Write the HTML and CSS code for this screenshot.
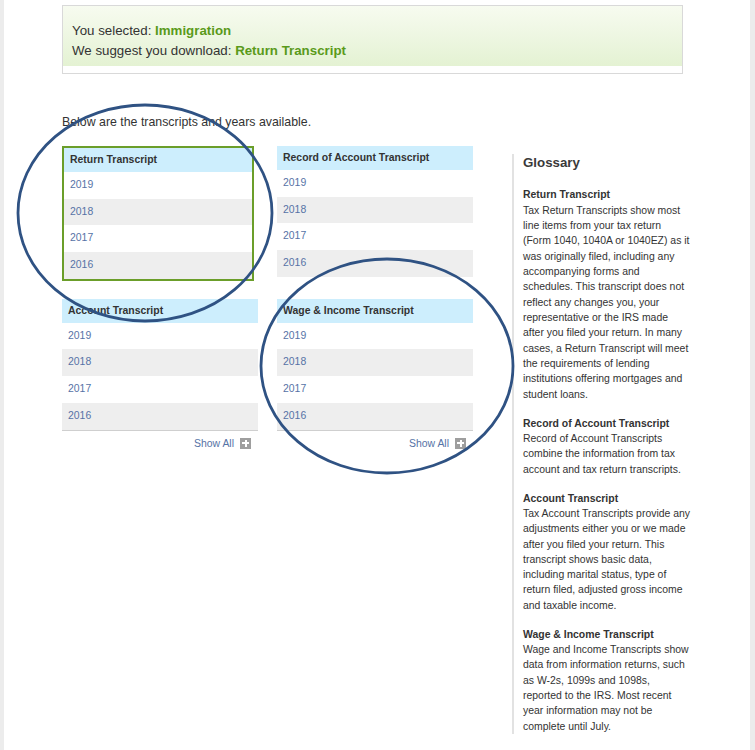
FILE: index.html
```html
<!DOCTYPE html>
<html>
<head>
<meta charset="utf-8">
<link rel="stylesheet" href="styles.css">
</head>
<body>
<div class="page">
  <div class="alert">
    <div class="alert-inner">
      <div>You selected: <strong>Immigration</strong></div>
      <div>We suggest you download: <strong>Return Transcript</strong></div>
    </div>
  </div>

  <p class="intro">Below are the transcripts and years available.</p>

  <div class="main">
    <div class="cards">
      <div class="card selected">
        <div class="card-head">Return Transcript</div>
        <div class="row">2019</div>
        <div class="row alt">2018</div>
        <div class="row">2017</div>
        <div class="row alt">2016</div>
      </div>
      <div class="card">
        <div class="card-head">Record of Account Transcript</div>
        <div class="row">2019</div>
        <div class="row alt">2018</div>
        <div class="row">2017</div>
        <div class="row alt">2016</div>
      </div>
      <div class="card">
        <div class="card-head">Account Transcript</div>
        <div class="rows-bordered">
          <div class="row">2019</div>
          <div class="row alt">2018</div>
          <div class="row">2017</div>
          <div class="row alt">2016</div>
        </div>
        <div class="show-all">Show All <span class="plus"></span></div>
      </div>
      <div class="card">
        <div class="card-head">Wage &amp; Income Transcript</div>
        <div class="rows-bordered">
          <div class="row">2019</div>
          <div class="row alt">2018</div>
          <div class="row">2017</div>
          <div class="row alt">2016</div>
        </div>
        <div class="show-all">Show All <span class="plus"></span></div>
      </div>
    </div>

    <div class="glossary">
      <h3 class="glossary-title">Glossary</h3>
      <div class="term">
        <div class="term-name">Return Transcript</div>
        <div class="term-text">Tax Return Transcripts show most<br>line items from your tax return<br>(Form 1040, 1040A or 1040EZ) as it<br>was originally filed, including any<br>accompanying forms and<br>schedules. This transcript does not<br>reflect any changes you, your<br>representative or the IRS made<br>after you filed your return. In many<br>cases, a Return Transcript will meet<br>the requirements of lending<br>institutions offering mortgages and<br>student loans.</div>
      </div>
      <div class="term">
        <div class="term-name">Record of Account Transcript</div>
        <div class="term-text">Record of Account Transcripts<br>combine the information from tax<br>account and tax return transcripts.</div>
      </div>
      <div class="term">
        <div class="term-name">Account Transcript</div>
        <div class="term-text">Tax Account Transcripts provide any<br>adjustments either you or we made<br>after you filed your return. This<br>transcript shows basic data,<br>including marital status, type of<br>return filed, adjusted gross income<br>and taxable income.</div>
      </div>
      <div class="term">
        <div class="term-name">Wage &amp; Income Transcript</div>
        <div class="term-text">Wage and Income Transcripts show<br>data from information returns, such<br>as W-2s, 1099s and 1098s,<br>reported to the IRS. Most recent<br>year information may not be<br>complete until July.</div>
      </div>
    </div>
  </div>
</div>

<svg class="annotations" width="755" height="750" viewBox="0 0 755 750">
  <ellipse cx="145" cy="213" rx="127" ry="108" />
  <ellipse cx="387" cy="366" rx="126" ry="107" />
</svg>
</body>
</html>
```

FILE: styles.css
```css
html, body {
  margin: 0;
  padding: 0;
}

body {
  background: #ececec;
  font-family: "Liberation Sans", Arial, sans-serif;
  color: #333;
  position: relative;
  width: 755px;
  height: 750px;
  overflow: hidden;
}

.page {
  margin-left: 4px;
  width: 746px;
  min-height: 750px;
  background: #fff;
  box-sizing: border-box;
  padding: 5px 0 0 58px;
}

.alert {
  width: 621px;
  box-sizing: border-box;
  border: 1px solid #d9d9d9;
  background: #fff;
  padding-bottom: 7px;
}

.alert-inner {
  background: linear-gradient(#f7fbf0, #e4f2d3);
  padding: 15px 10px 5px 9px;
  font-size: 13.3px;
  line-height: 20px;
  color: #333;
}

.alert-inner strong {
  color: #5a9a1a;
}

.intro {
  margin: 39px 0 0;
  font-size: 12.35px;
  line-height: 18px;
  color: #333;
}

.main {
  display: flex;
  align-items: flex-start;
  margin-top: 15px;
}

.cards {
  display: grid;
  grid-template-columns: 196px 196px;
  column-gap: 19px;
  row-gap: 18px;
  align-items: start;
}

.card {
  width: 196px;
  box-sizing: border-box;
  font-size: 10.45px;
}

.card.selected {
  width: 192px;
  border: 2px solid #6b9e2a;
}

.card-head {
  height: 24px;
  line-height: 24px;
  background: #cdeefd;
  padding-left: 6px;
  font-weight: bold;
  color: #333;
}

.row {
  height: 26.7px;
  line-height: 26.7px;
  padding-left: 6px;
  color: #5673a6;
  background: #fff;
}

.row.alt {
  background: #eeeeee;
}

.rows-bordered {
  border-bottom: 1px solid #cfcfcf;
}

.show-all {
  display: flex;
  justify-content: flex-end;
  align-items: center;
  gap: 6px;
  margin-top: 7px;
  padding-right: 7px;
  height: 11px;
  line-height: 11px;
  color: #5673a6;
}

.plus {
  position: relative;
  width: 11px;
  height: 11px;
  background: #9e9e9e;
}

.plus::before,
.plus::after {
  content: "";
  position: absolute;
  background: #fff;
}

.plus::before {
  left: 2px;
  top: 4.5px;
  width: 7px;
  height: 2px;
}

.plus::after {
  left: 4.5px;
  top: 2px;
  width: 2px;
  height: 7px;
}

.glossary {
  margin-left: 39px;
  margin-top: 8px;
  border-left: 2px solid #e2e2e2;
  padding: 1px 0 0 9px;
  width: 200px;
  white-space: nowrap;
  color: #333;
}

.glossary-title {
  margin: 0 0 16.3px;
  font-size: 13.3px;
  line-height: 16px;
  font-weight: bold;
  color: #3a3a3a;
}

.term {
  font-size: 10.45px;
  line-height: 15.33px;
}

.term + .term {
  margin-top: 13.67px;
}

.term-name {
  font-weight: bold;
}

.annotations {
  position: absolute;
  left: 0;
  top: 0;
  pointer-events: none;
}

.annotations ellipse {
  fill: none;
  stroke: #2f5283;
  stroke-width: 2.8;
}
```
